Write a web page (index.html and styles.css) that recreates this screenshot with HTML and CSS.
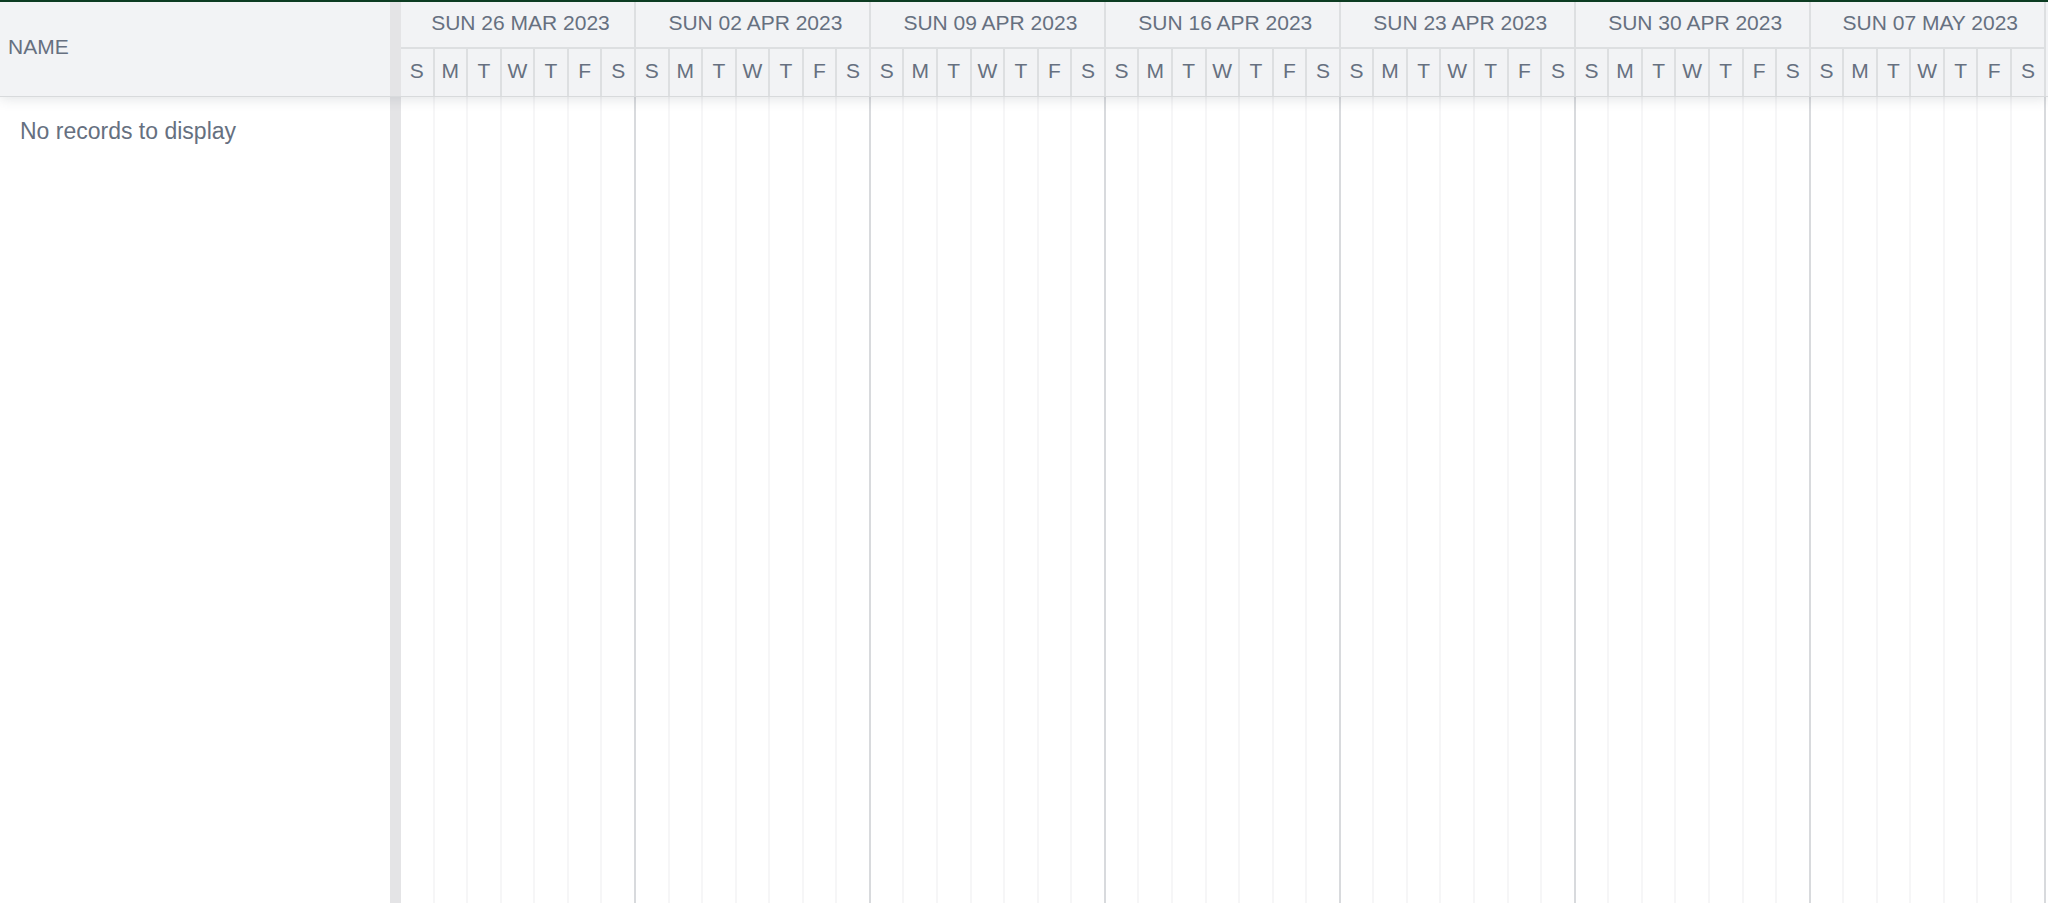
FILE: index.html
```html
<!DOCTYPE html>
<html lang="en">
    <head>
        <title>Gantt</title>
        <meta charset="utf-8" />
        <meta name="viewport" content="width=device-width, initial-scale=1.0" />
        <link rel="stylesheet" href="styles.css">
    </head>
    <body>
        <main class="gantt">
            <header class="gantt-header">
                <div class="pane name">NAME</div>
                <div class="splitter"></div>
                <table class="timeline">
                    <thead>
                        <tr id="weeks"></tr>
                        <tr id="days"></tr>
                    </thead>
                </table>
            </header>
            <section class="gantt-body">
                <div class="pane empty">No records to display</div>
                <div class="splitter"></div>
                <table class="timeline">
                    <tbody>
                        <tr id="grid"></tr>
                    </tbody>
                </table>
            </section>
        </main>
        <script src="script.js"></script>
    </body>
</html>
```
FILE: script.js
```
const weeks = [
    'SUN 26 MAR 2023',
    'SUN 02 APR 2023',
    'SUN 09 APR 2023',
    'SUN 16 APR 2023',
    'SUN 23 APR 2023',
    'SUN 30 APR 2023',
    'SUN 07 MAY 2023'
]
const days = ['S', 'M', 'T', 'W', 'T', 'F', 'S']

let addCell = (row, tag, text) => {
    let cell = document.createElement(tag)
    cell.textContent = text
    document.getElementById(row).appendChild(cell)
    return cell
}

weeks.forEach((week) => {
    addCell('weeks', 'th', week).colSpan = days.length
    days.forEach((day) => {
        addCell('days', 'th', day)
        addCell('grid', 'td', '')
    })
})
```
FILE: styles.css
```css
* {
    box-sizing: border-box;
}
body {
    margin: 0;
    font-family: "Liberation Sans", Arial, sans-serif;
    color: #667080;
    background: #fff;
}
.gantt {
    display: flex;
    flex-direction: column;
    height: 100vh;
    border-top: 2px solid #0c3c22;
    overflow: hidden;
}
.gantt-header {
    display: flex;
    position: relative;
    z-index: 1;
    background: #f2f3f5;
    border-bottom: 1px solid #d8dadc;
    box-shadow: 0 2px 12px rgba(60, 75, 85, 0.15);
    font-size: 21px;
}
.gantt-body {
    display: flex;
    flex: 1;
    font-size: 23px;
}
.pane {
    flex: none;
    width: 390px;
}
.name {
    display: flex;
    align-items: center;
    padding: 0 8px 4px;
}
.empty {
    padding: 20px;
    line-height: 28px;
}
.splitter {
    flex: none;
    width: 11px;
    background: #e4e4e6;
}
.timeline {
    flex: 1;
    width: 100%;
    margin-right: 2px;
    table-layout: fixed;
    border-collapse: separate;
    border-spacing: 0;
}
th {
    height: 47px;
    padding: 0 0 4px;
    font-weight: normal;
    text-align: center;
    border-right: 2px solid #dddfe1;
}
#weeks th {
    padding-left: 6px;
    border-bottom: 2px solid #dddfe1;
}
td {
    padding: 0;
    border-right: 2px solid #f6f6f7;
}
td:nth-child(7n) {
    border-right: 2px solid #d8dadd;
}
```
